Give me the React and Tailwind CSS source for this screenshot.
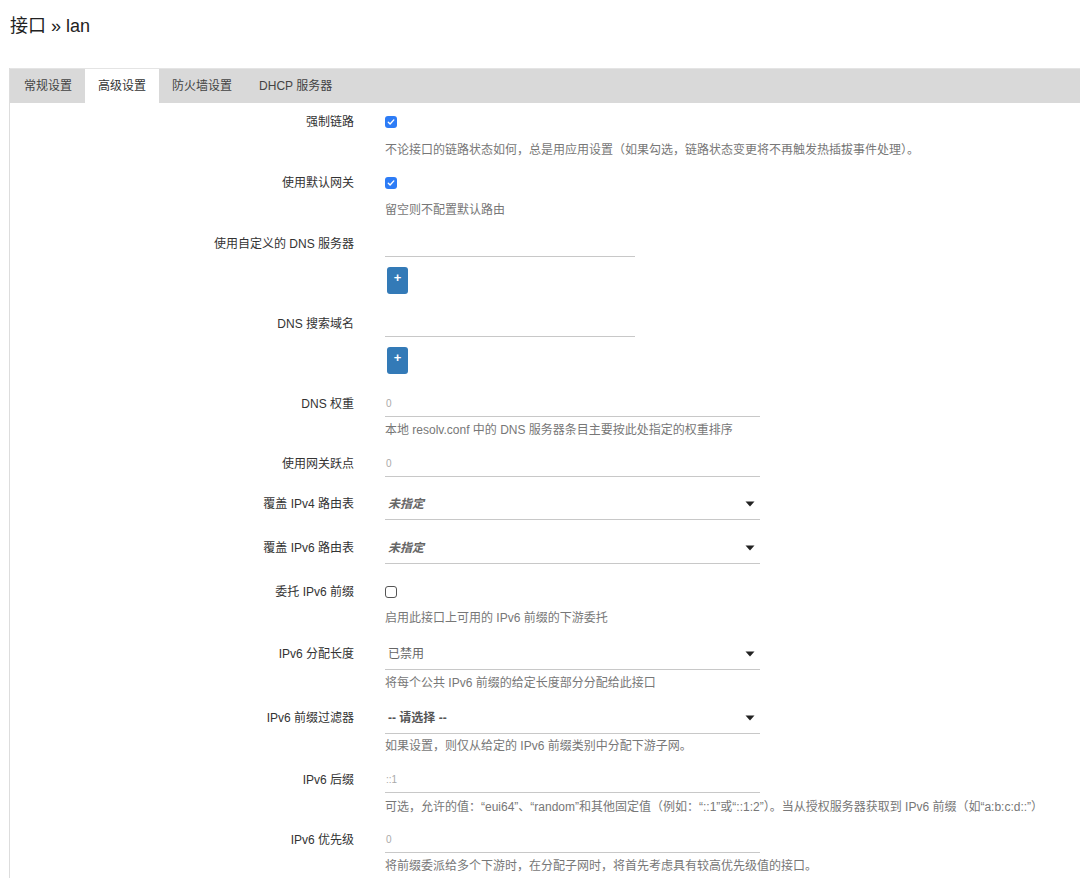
import React from 'react';

const FONT = { fontFamily: '"Liberation Sans", "Noto Sans CJK SC", sans-serif' };

const tabs = [
  { key: 'general', label: '常规设置' },
  { key: 'advanced', label: '高级设置' },
  { key: 'firewall', label: '防火墙设置' },
  { key: 'dhcp', label: 'DHCP 服务器' },
];

const Check = ({ checked }) =>
  checked ? (
    <span className="flex h-[12px] w-[12px] items-center justify-center rounded-[3px] bg-[#2d7cf6]">
      <svg width="8" height="8" viewBox="0 0 8 8" fill="none">
        <path d="M1.3 4.2 3.1 6 6.8 1.9" stroke="#fff" strokeWidth="1.4" strokeLinecap="round" strokeLinejoin="round" />
      </svg>
    </span>
  ) : (
    <span className="block h-[12px] w-[12px] rounded-[3px] border border-[#555] bg-white" />
  );

const Input = ({ value, w = 'w-[375px]' }) => (
  <div className={`${w} h-[25px] border-b border-[#c8c8c8] pl-[1px] text-[10px] leading-[24px] text-[#aaa]`}>
    {value}
  </div>
);

const Select = ({ value, variant }) => (
  <div className="flex h-[32px] w-[375px] items-center justify-between border-b border-[#c8c8c8] pl-[3px] pr-[5px]">
    <span
      className={
        variant === 'italic'
          ? 'text-[12px] font-bold italic text-[#666]'
          : variant === 'bold'
            ? 'text-[12px] font-bold text-[#555]'
            : 'text-[12px] text-[#666]'
      }
    >
      {value}
    </span>
    <svg width="10" height="6" viewBox="0 0 10 6">
      <path d="M0.5 0.5h9L5 5.5z" fill="#222" />
    </svg>
  </div>
);

const Desc = ({ children, mt }) => (
  <div className={`${mt} h-[20px] whitespace-nowrap text-[12px] leading-[20px] text-[#777]`}>{children}</div>
);

const AddBtn = ({ mt }) => (
  <div className={`${mt} ml-[2px] flex h-[27px] w-[21px] justify-center rounded-[3px] bg-[#337ab7] pt-[4px] text-[13px] font-bold leading-[14px] text-white`}>
    +
  </div>
);

const Row = ({ label, mt, h = 'h-[24px] leading-[24px]', children }) => (
  <div className={`${mt} flex`}>
    <div className={`w-[345px] shrink-0 whitespace-nowrap pr-[1px] text-right text-[12px] text-[#333] ${h}`}>{label}</div>
    <div className="ml-[30px] flex flex-col">{children}</div>
  </div>
);

export default function App() {
  return (
    <div className="min-h-[878px] overflow-hidden bg-white pl-[9px] pt-[14px]" style={FONT}>
      <h1 className="h-[24px] pl-[1px] text-[18px] leading-[24px] text-[#222]">接口 » lan</h1>
      <div className="mt-[30px] min-h-[810px] border-l border-[#ddd]">
        <div className="flex h-[35px] border-t border-[#e4e4e4] bg-[#d9d9d9]">
          {tabs.map((t) => (
            <div
              key={t.key}
              className={`px-[13px] text-[12px] leading-[34px] ${
                t.key === 'advanced' ? 'bg-white text-[#333]' : 'text-[#444]'
              } ${t.key === 'general' ? 'pl-[14px]' : ''} ${t.key === 'dhcp' ? 'px-[14px]' : ''}`}
            >
              {t.label}
            </div>
          ))}
        </div>

        <Row label="强制链路" mt="mt-[7px]">
          <div className="flex h-[24px] items-center"><Check checked /></div>
          <Desc mt="mt-[6px]">不论接口的链路状态如何，总是用应用设置（如果勾选，链路状态变更将不再触发热插拔事件处理）。</Desc>
        </Row>

        <Row label="使用默认网关" mt="mt-[11px]">
          <div className="flex h-[24px] items-center"><Check checked /></div>
          <Desc mt="mt-[5px]">留空则不配置默认路由</Desc>
        </Row>

        <Row label="使用自定义的 DNS 服务器" mt="mt-[12px]">
          <Input value="" w="w-[250px]" />
          <AddBtn mt="mt-[10px]" />
        </Row>

        <Row label="DNS 搜索域名" mt="mt-[18px]">
          <Input value="" w="w-[250px]" />
          <AddBtn mt="mt-[10px]" />
        </Row>

        <Row label="DNS 权重" mt="mt-[18px]">
          <Input value="0" />
          <Desc mt="mt-[3px]">本地 resolv.conf 中的 DNS 服务器条目主要按此处指定的权重排序</Desc>
        </Row>

        <Row label="使用网关跃点" mt="mt-[12px]">
          <Input value="0" />
        </Row>

        <Row label="覆盖 IPv4 路由表" mt="mt-[11px]" h="h-[32px] leading-[32px]">
          <Select value="未指定" variant="italic" />
        </Row>

        <Row label="覆盖 IPv6 路由表" mt="mt-[12px]" h="h-[32px] leading-[32px]">
          <Select value="未指定" variant="italic" />
        </Row>

        <Row label="委托 IPv6 前缀" mt="mt-[16px]">
          <div className="flex h-[24px] items-center"><Check /></div>
          <Desc mt="mt-[4px]">启用此接口上可用的 IPv6 前缀的下游委托</Desc>
        </Row>

        <Row label="IPv6 分配长度" mt="mt-[10px]" h="h-[32px] leading-[32px]">
          <Select value="已禁用" />
          <Desc mt="mt-[3px]">将每个公共 IPv6 前缀的给定长度部分分配给此接口</Desc>
        </Row>

        <Row label="IPv6 前缀过滤器" mt="mt-[9px]" h="h-[32px] leading-[32px]">
          <Select value="-- 请选择 --" variant="bold" />
          <Desc mt="mt-[2px]">如果设置，则仅从给定的 IPv6 前缀类别中分配下游子网。</Desc>
        </Row>

        <Row label="IPv6 后缀" mt="mt-[12px]">
          <Input value="::1" />
          <Desc mt="mt-[4px]">可选，允许的值：“eui64”、“random”和其他固定值（例如：“::1”或“::1:2”）。当从授权服务器获取到 IPv6 前缀（如“a:b:c:d::”）</Desc>
        </Row>

        <Row label="IPv6 优先级" mt="mt-[11px]">
          <Input value="0" />
          <Desc mt="mt-[3px]">将前缀委派给多个下游时，在分配子网时，将首先考虑具有较高优先级值的接口。</Desc>
        </Row>
      </div>
    </div>
  );
}
